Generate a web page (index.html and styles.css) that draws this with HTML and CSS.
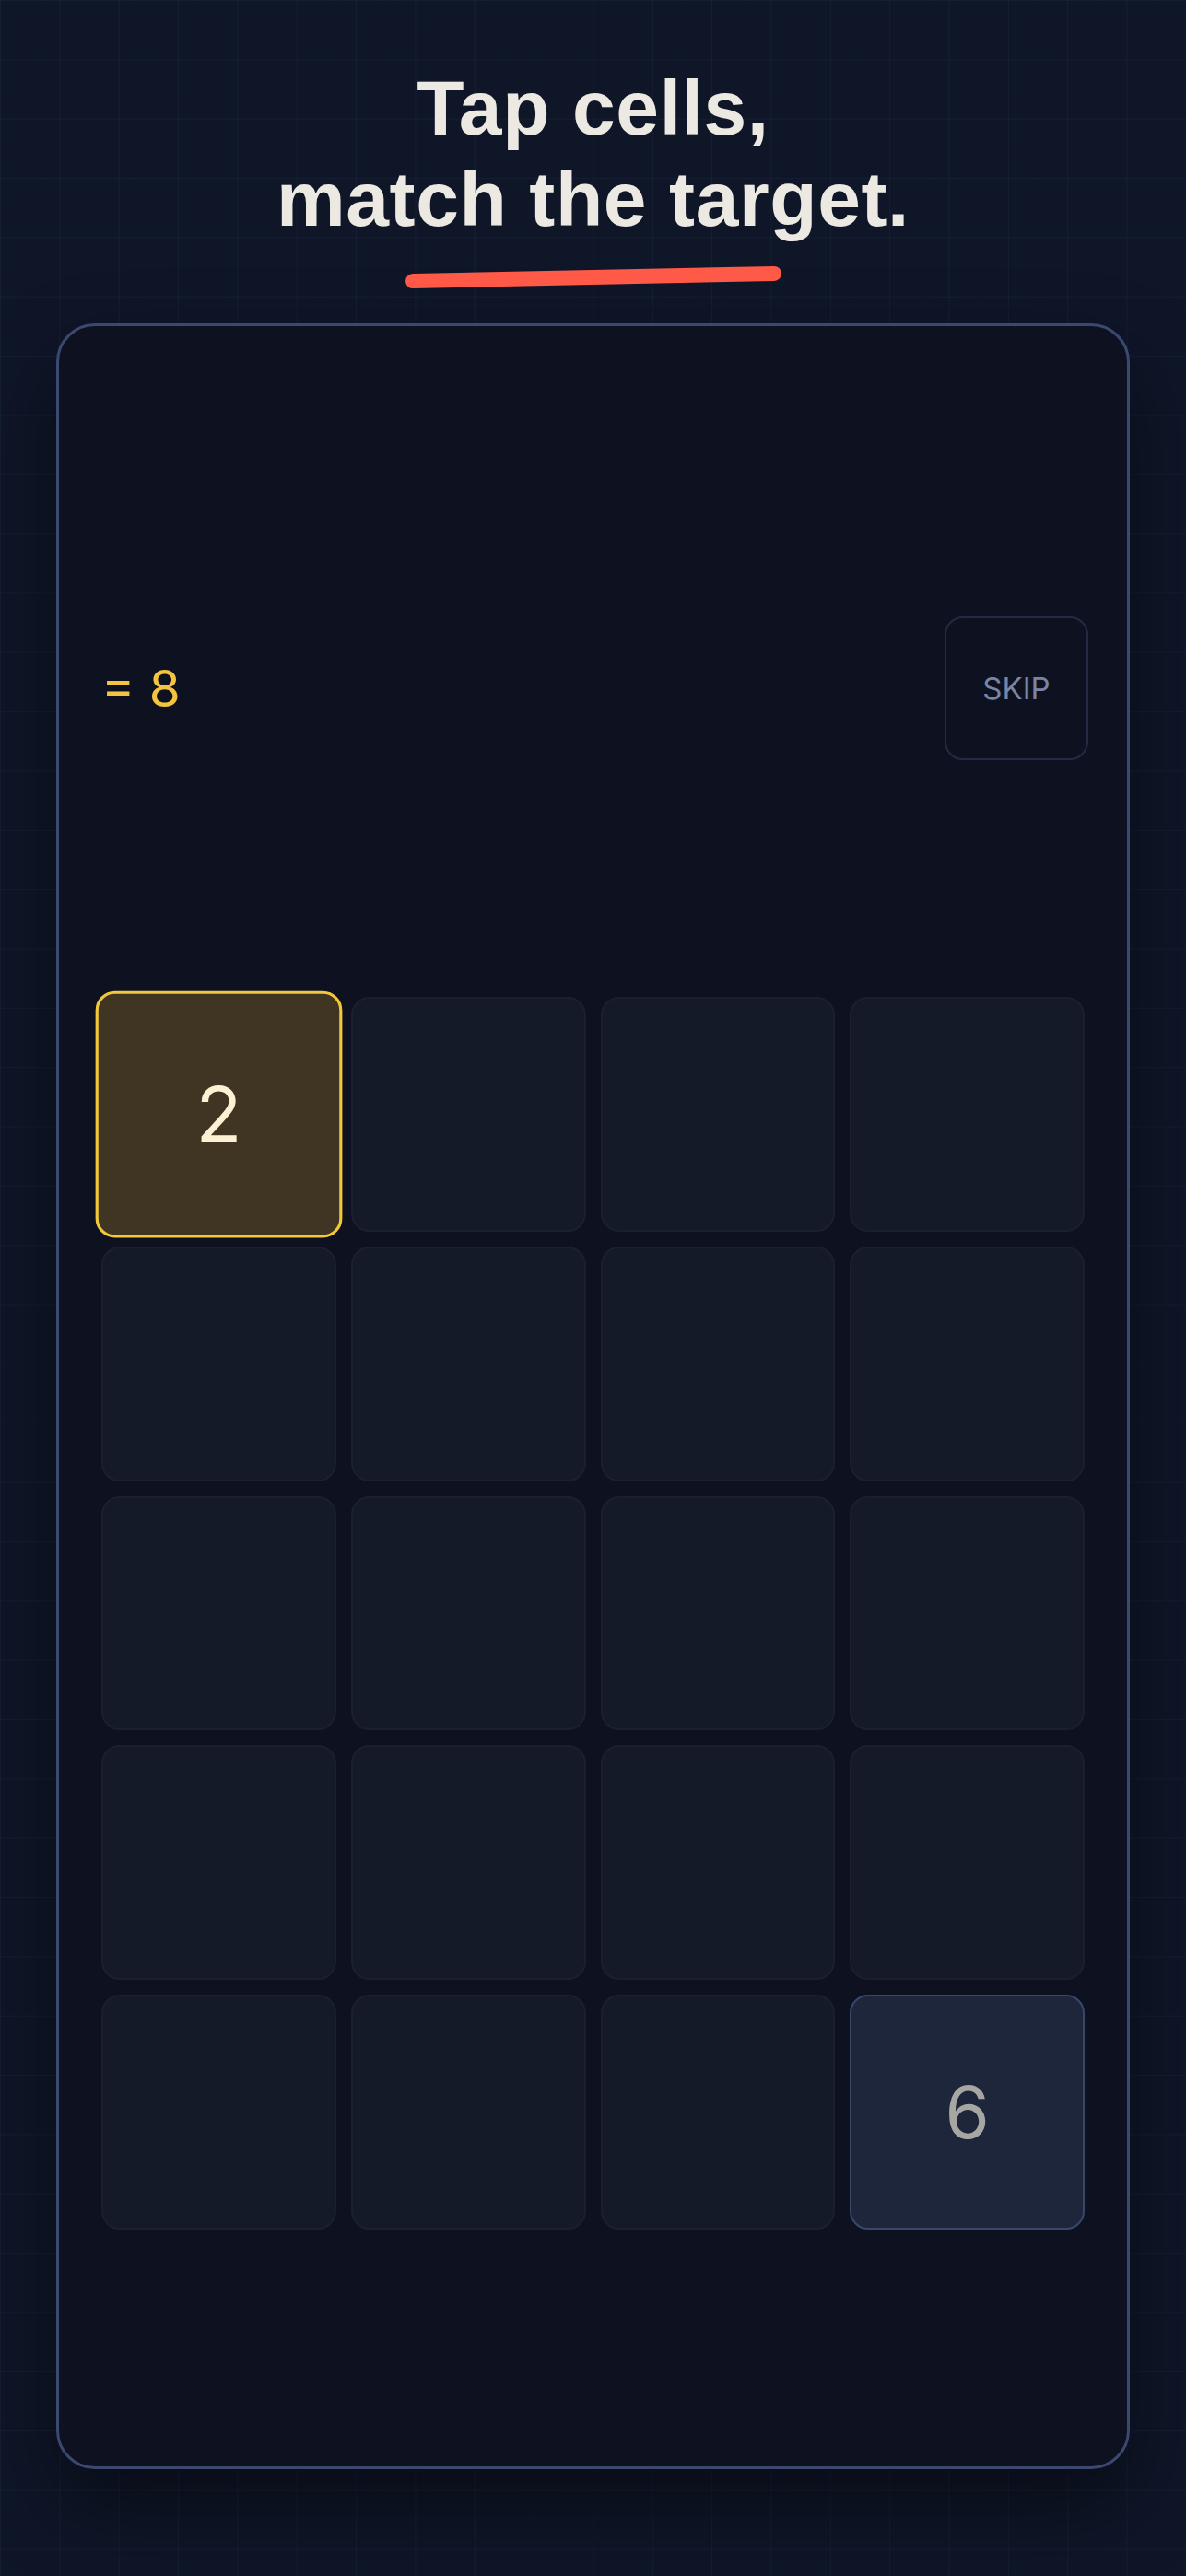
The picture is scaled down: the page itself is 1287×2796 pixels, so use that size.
FILE: index.html
```html
<!DOCTYPE html>
<html lang="en">
<head>
  <meta charset="UTF-8" />
  <meta name="viewport" content="width=device-width, initial-scale=1" />
  <title>Tap cells</title>
  <link rel="stylesheet" href="styles.css">
</head>
<body>
  <h1 class="headline">Tap cells,<br>match the target.</h1>
  <div class="underline"></div>

  <div class="board">
    <div class="board-head">
      <p class="target">= 8</p>
      <button class="skip">SKIP</button>
    </div>

    <div class="grid">
      <div class="cell selected">2</div>
      <div class="cell"></div>
      <div class="cell"></div>
      <div class="cell"></div>

      <div class="cell"></div>
      <div class="cell"></div>
      <div class="cell"></div>
      <div class="cell"></div>

      <div class="cell"></div>
      <div class="cell"></div>
      <div class="cell"></div>
      <div class="cell"></div>

      <div class="cell"></div>
      <div class="cell"></div>
      <div class="cell"></div>
      <div class="cell"></div>

      <div class="cell"></div>
      <div class="cell"></div>
      <div class="cell"></div>
      <div class="cell filled">6</div>
    </div>
  </div>
</body>
</html>
```

FILE: styles.css
```css
body {
  margin: 0;
  padding: 68px 61px 0;
  min-height: 100vh;
  box-sizing: border-box;
  font-family: 'Inter', 'Roboto', sans-serif;
  background-color: #0f1628;
  background-image:
    linear-gradient(rgba(110, 130, 190, 0.07) 1px, transparent 1px),
    linear-gradient(90deg, rgba(110, 130, 190, 0.07) 1px, transparent 1px);
  background-size: 5vw 5vw;
  color: #ece9e3;
}

.headline {
  margin: 0;
  text-align: center;
  font-family: 'Liberation Sans', Arial, sans-serif;
  font-weight: 700;
  font-size: 84px;
  line-height: 99px;
  letter-spacing: 0.6px;
  color: #ece9e3;
}

.underline {
  width: 408px;
  height: 16px;
  margin: 27px auto 0;
  border-radius: 8px;
  background: #ff5947;
  transform: rotate(-1.2deg);
}

.board {
  margin-top: 42px;
  padding: 315px 46px 257px;
  background: #0e1220;
  border: 3px solid #3b4870;
  border-radius: 42px;
  box-shadow: 0 40px 90px rgba(0, 0, 0, 0.45);
}

.board-head {
  display: flex;
  align-items: center;
  justify-content: space-between;
  height: 156px;
}

.target {
  margin: 0;
  font-size: 55px;
  color: #f4c33f;
}

.skip {
  width: 156px;
  height: 156px;
  margin-right: -4px;
  padding: 0;
  background: transparent;
  border: 2px solid #232a42;
  border-radius: 20px;
  font-family: 'Inter', sans-serif;
  font-size: 33px;
  color: #7a85a6;
}

.grid {
  margin-top: 257px;
  display: grid;
  grid-template-columns: repeat(4, 1fr);
  gap: 16px;
}

.cell {
  aspect-ratio: 1;
  display: flex;
  align-items: center;
  justify-content: center;
  background: #151a28;
  border: 2px solid #1a2031;
  border-radius: 20px;
  font-size: 78px;
  color: #a8a6a2;
}

.cell.selected {
  background: #3f3522;
  border: 3px solid #f2c83a;
  color: #fdf1d3;
  transform: scale(1.05);
}

.cell.filled {
  background: #1d263b;
  border-color: #39476a;
}
```
